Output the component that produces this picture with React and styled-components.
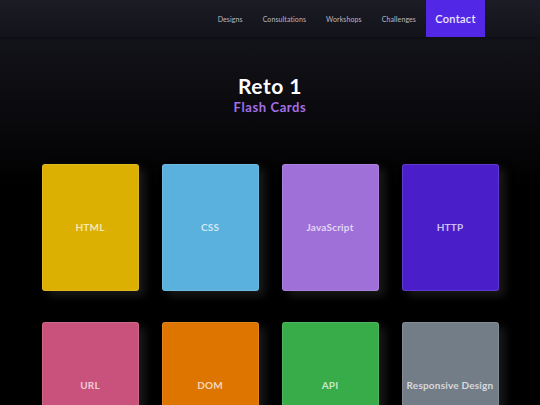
import React from 'react'
import { styled, createGlobalStyle } from 'styled-components'

const GlobalStyle = createGlobalStyle`
  html, body {
    margin: 0;
    padding: 0;
  }
  body {
    min-height: 405px;
    background: linear-gradient(180deg, #1c1c26 0px, #121219 40px, #08080b 130px, #000 190px);
    font-family: Lato, "Noto Sans", sans-serif;
    overflow: hidden;
  }
`

const Nav = styled.nav`
  height: 37px;
  display: flex;
  justify-content: flex-end;
  align-items: stretch;
  padding-right: 55px;
  box-shadow: 0 1px 3px rgba(0, 0, 0, 0.35);
`

const NavLink = styled.a`
  display: flex;
  align-items: center;
  margin-left: 20px;
  font-size: 7px;
  letter-spacing: 0.1px;
  color: #b9b9c2;
  text-decoration: none;
`

const ContactBtn = styled.a`
  display: flex;
  align-items: center;
  margin-left: 10px;
  padding: 0 10px;
  width: 59px;
  box-sizing: border-box;
  justify-content: center;
  background: #5327e6;
  color: #ece8ff;
  font-size: 11px;
  font-weight: 600;
  letter-spacing: 0.3px;
  text-decoration: none;
`

const Hero = styled.header`
  display: flex;
  flex-direction: column;
  align-items: center;
  padding-top: 35px;
  height: 127px;
  box-sizing: border-box;
`

const Title = styled.h1`
  margin: 0;
  font-size: 21px;
  line-height: 27px;
  font-weight: 700;
  color: #fff;
  letter-spacing: 0.5px;
`

const Subtitle = styled.h2`
  margin: 0;
  font-size: 13px;
  line-height: 17px;
  font-weight: 700;
  color: #a46ee6;
  letter-spacing: 0.6px;
`

const Grid = styled.section`
  display: grid;
  grid-template-columns: repeat(4, 97px);
  column-gap: 23px;
  row-gap: 31px;
  justify-content: center;
`

const Card = styled.div`
  height: 127px;
  border-radius: 3px;
  background: ${(p) => p.$bg};
  border: 1px solid rgba(255, 255, 255, 0.12);
  box-sizing: border-box;
  box-shadow: 6px 5px 8px rgba(45, 45, 45, 0.55);
  display: flex;
  align-items: center;
  justify-content: center;
  padding-bottom: 2px;
  font-size: 10px;
  font-weight: 700;
  letter-spacing: 0.2px;
  color: rgba(255, 255, 255, 0.72);
  white-space: nowrap;
`

const links = ['Designs', 'Consultations', 'Workshops', 'Challenges']

const cards = [
  { label: 'HTML', bg: '#dbb002' },
  { label: 'CSS', bg: '#5ab1dd' },
  { label: 'JavaScript', bg: '#a070d9' },
  { label: 'HTTP', bg: '#4a1ec9' },
  { label: 'URL', bg: '#c9527c' },
  { label: 'DOM', bg: '#dd7500' },
  { label: 'API', bg: '#38ac48' },
  { label: 'Responsive Design', bg: '#737d88' },
]

const App = () => {
  return (
    <>
      <GlobalStyle />
      <Nav>
        {links.map((l) => (
          <NavLink key={l} href="#">{l}</NavLink>
        ))}
        <ContactBtn href="#">Contact</ContactBtn>
      </Nav>
      <Hero>
        <Title>Reto 1</Title>
        <Subtitle>Flash Cards</Subtitle>
      </Hero>
      <Grid>
        {cards.map(({ label, bg }) => (
          <Card key={label} $bg={bg}>{label}</Card>
        ))}
      </Grid>
    </>
  )
}

export default App
